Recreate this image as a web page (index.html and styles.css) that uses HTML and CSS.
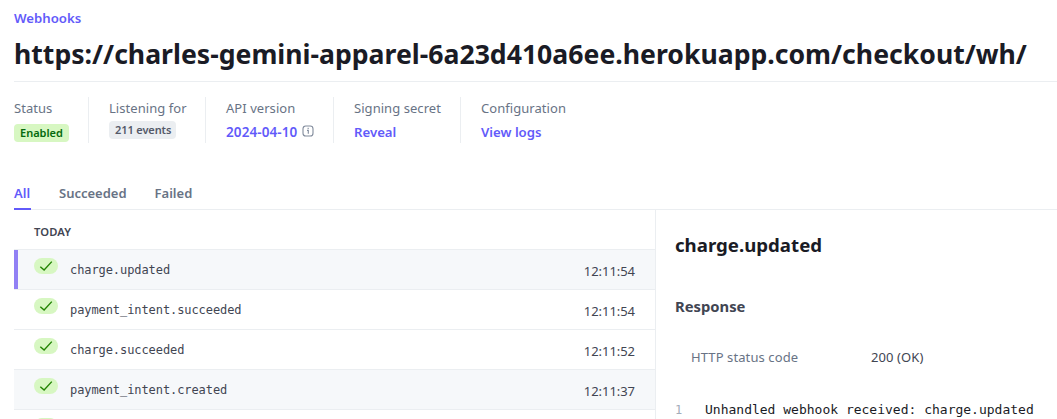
FILE: index.html
```html
<!DOCTYPE html>
<html lang="en">
<head>
<meta charset="utf-8">
<title>Webhooks</title>
<link rel="stylesheet" href="styles.css">
</head>
<body>
<div class="page">
  <header class="header">
    <a class="crumb">Webhooks</a>
    <h1 class="title">https://charles-gemini-apparel-6a23d410a6ee.herokuapp.com/checkout/wh/</h1>
  </header>
  <section class="meta">
    <div class="item item-status"><span class="label">Status</span><span class="badge badge-green">Enabled</span></div>
    <div class="item item-listening"><span class="label">Listening for</span><span class="badge badge-gray">211 events</span></div>
    <div class="item item-version"><span class="label">API version</span><span class="link"><span class="version">2024-04-10</span><svg class="info" viewBox="0 0 12 12"><rect x="1" y="1" width="10" height="10" rx="2.8"/><path d="M5 5.4h1.3v3.3M5.6 3.4h1.1"/></svg></span></div>
    <div class="item item-secret"><span class="label">Signing secret</span><span class="link">Reveal</span></div>
    <div class="item item-config"><span class="label">Configuration</span><span class="link">View logs</span></div>
  </section>
  <nav class="tabs"><a class="tab active">All</a><a class="tab">Succeeded</a><a class="tab">Failed</a></nav>
  <main class="content">
    <section class="list">
      <h2 class="day">TODAY</h2>
      <div class="row selected"><span class="check"><svg viewBox="0 0 24 16"><path d="M6.3 8.7 10.1 12 17.8 3.6"/></svg></span><span class="event">charge.updated</span><time class="time">12:11:54</time></div>
      <div class="row"><span class="check"><svg viewBox="0 0 24 16"><path d="M6.3 8.7 10.1 12 17.8 3.6"/></svg></span><span class="event">payment_intent.succeeded</span><time class="time">12:11:54</time></div>
      <div class="row"><span class="check"><svg viewBox="0 0 24 16"><path d="M6.3 8.7 10.1 12 17.8 3.6"/></svg></span><span class="event">charge.succeeded</span><time class="time">12:11:52</time></div>
      <div class="row shaded"><span class="check"><svg viewBox="0 0 24 16"><path d="M6.3 8.7 10.1 12 17.8 3.6"/></svg></span><span class="event">payment_intent.created</span><time class="time">12:11:37</time></div>
      <div class="row"><span class="check"><svg viewBox="0 0 24 16"><path d="M6.3 8.7 10.1 12 17.8 3.6"/></svg></span></div>
    </section>
    <section class="detail">
      <h2 class="detail-title">charge.updated</h2>
      <h3 class="subtitle">Response</h3>
      <div class="status"><span class="status-label">HTTP status code</span><span class="status-value">200 (OK)</span></div>
      <div class="code"><span class="line-no">1</span><code class="line">Unhandled webhook received: charge.updated</code></div>
    </section>
  </main>
</div>
</body>
</html>
```
FILE: styles.css
```css
* { box-sizing: border-box; }
body { margin: 0; background: #fff; font-family: "Noto Sans", sans-serif; font-size: 14px; line-height: 20px; color: #414552; }
h1, h2, h3 { margin: 0; }
.page { width: 1057px; height: 419px; overflow: hidden; padding-left: 14px; }
.header { height: 82px; padding-top: 8px; border-bottom: 1px solid #ebeef1; white-space: nowrap; }
.crumb { display: block; color: #625afa; font-size: 13.2px; font-weight: 600; }
.title { margin-top: 8px; font-size: 26.62px; line-height: 36px; font-weight: 700; color: #1a1b25; }
.meta { display: flex; padding-top: 15px; height: 91px; }
.item { height: 46px; padding: 1px 19px 0 20px; border-right: 1px solid #ebeef1; white-space: nowrap; }
.item-status { width: 75px; padding-left: 0; }
.item-listening { width: 117px; }
.item-version { width: 128px; }
.item-secret { width: 127px; }
.item-config { border-right: 0; }
.label { display: block; font-size: 13px; letter-spacing: .05px; color: #687385; }
.badge { display: block; width: max-content; padding: 0 6px; border-radius: 4px; font-size: 11px; line-height: 18px; font-weight: 600; }
.badge-green { margin-top: 6px; background: #d7f7c2; color: #05690d; }
.badge-gray { width: 67px; margin-top: 3px; background: #ebeef1; color: #545969; letter-spacing: -.1px; }
.link { display: flex; align-items: center; margin-top: 4px; font-size: 13.2px; font-weight: 600; color: #625afa; }
.version { width: 72px; font-size: 13.5px; letter-spacing: .1px; }
.info { width: 12px; height: 12px; margin: -3px 0 0 4px; fill: none; stroke: #818b9c; stroke-width: 1.1; }
.tabs { display: flex; gap: 28px; height: 37px; padding-top: 10px; border-bottom: 1px solid #ebeef1; }
.tab { height: 27px; font-size: 13px; font-weight: 600; color: #687385; }
.tab.active { width: 17px; color: #625afa; border-bottom: 2px solid #625afa; }
.content { display: flex; }
.list { width: 642px; height: 209px; overflow: hidden; border-right: 1px solid #ebeef1; }
.day { height: 40px; padding: 12px 20px 0; font-size: 11.2px; font-weight: 600; letter-spacing: .1px; border-bottom: 1px solid #ebeef1; }
.row { display: flex; height: 40px; padding: 0 20px; border-bottom: 1px solid #ebeef1; }
.selected, .shaded { background: #f6f8fa; }
.selected { position: relative; }
.selected::before { content: ""; position: absolute; left: 0; top: 0; width: 4px; height: 39px; background: #9180f4; }
.check { width: 24px; height: 16px; margin: 8px 12px 0 0; border-radius: 8px; background: #d7f7c2; }
.check svg { display: block; width: 24px; height: 16px; fill: none; stroke: #228403; stroke-width: 1.4; }
.event { padding-top: 10px; font-family: "DejaVu Sans Mono", monospace; font-size: 12px; letter-spacing: -.08px; }
.time { margin-left: auto; padding-top: 11px; font-size: 13px; letter-spacing: -.05px; }
.detail { flex: 1; padding: 23px 0 0 19px; white-space: nowrap; }
.detail-title { font-size: 18.65px; line-height: 24px; color: #1a1b25; }
.subtitle { margin-top: 39px; font-size: 14.8px; line-height: 20px; color: #414552; }
.status { display: flex; margin-top: 31px; padding-left: 16px; font-size: 13px; letter-spacing: .1px; }
.status-label { width: 180px; color: #687385; }
.status-value { color: #414552; }
.code { display: flex; margin-top: 33px; font-family: "DejaVu Sans Mono", monospace; font-size: 13px; }
.line-no { width: 30px; color: #a3acba; font-size: 12px; }
.line { font: inherit; color: #1a1b25; }
```
